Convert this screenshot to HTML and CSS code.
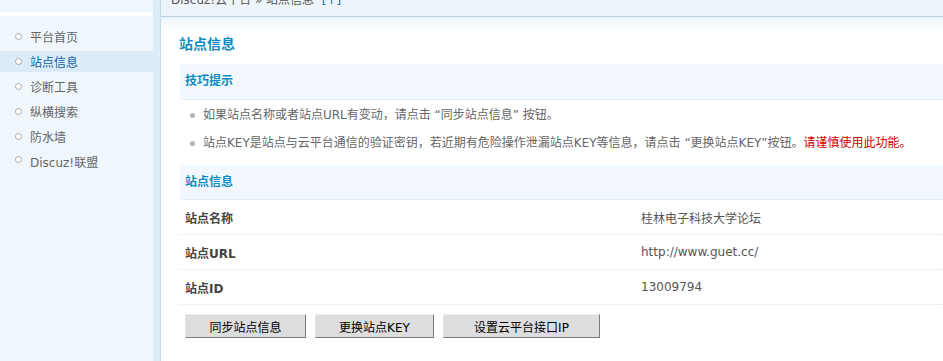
FILE: index.html
```html
<!DOCTYPE html>
<html lang="zh-CN">
<head>
	<meta charset="utf-8">
	<title>站点信息 - Discuz!云平台</title>
	<link rel="stylesheet" href="styles.css">
</head>
<body>

<div class="page">
	<div class="side">
		<div class="side-top"></div>
		<ul class="menu">
			<li><a href="#">平台首页</a></li>
			<li class="on"><a href="#">站点信息</a></li>
			<li><a href="#">诊断工具</a></li>
			<li><a href="#">纵横搜索</a></li>
			<li><a href="#">防水墙</a></li>
			<li class="last"><a href="#">Discuz!联盟</a></li>
		</ul>
	</div>

	<div class="main">
		<div class="crumb"><div class="crumb-text">Discuz!云平台 &raquo; 站点信息 &nbsp;<a href="#">[+]</a></div></div>

		<div class="content">
			<h3 class="title">站点信息</h3>

			<div class="box-head head-tips">技巧提示</div>
			<ul class="tips">
				<li>如果站点名称或者站点URL有变动，请点击 “同步站点信息” 按钮。</li>
				<li>站点KEY是站点与云平台通信的验证密钥，若近期有危险操作泄漏站点KEY等信息，请点击 “更换站点KEY”按钮。<span class="warn">请谨慎使用此功能。</span></li>
			</ul>

			<div class="box-head">站点信息</div>
			<div class="info">
				<div class="info-row"><span class="label">站点名称</span><span class="value">桂林电子科技大学论坛</span></div>
				<div class="info-row"><span class="label">站点URL</span><span class="value">http://www.guet.cc/</span></div>
				<div class="info-row"><span class="label">站点ID</span><span class="value">13009794</span></div>
			</div>

			<div class="buttons">
				<button class="btn btn-sync">同步站点信息</button>
				<button class="btn btn-key">更换站点KEY</button>
				<button class="btn btn-ip">设置云平台接口IP</button>
			</div>
		</div>
	</div>
</div>

</body>
</html>
```

FILE: styles.css
```css
body { margin: 0; padding: 0; font-family: "DejaVu Sans", "Noto Sans CJK SC", sans-serif; font-size: 12px; color: #666; background: #fff; }
ul { list-style: none; margin: 0; padding: 0; }
a { text-decoration: none; color: inherit; }

.page { display: flex; min-height: 361px; }

.side { width: 153px; flex: none; background: #eff7fc; border-right: 7px solid #ddedf8; }
.side-top { height: 12px; border-bottom: 4px solid #fbfdfe; background: #eef6fb; }
.menu { padding-top: 10px; }
.menu li { display: flex; align-items: center; height: 21px; margin-bottom: 4px; padding-left: 15px; }
.menu li::before { content: ""; width: 5px; height: 5px; border: 1px solid #aaa; border-radius: 50%; margin-right: 8px; background: #fff; }
.menu li.on { background: #dbecf8; color: #21629f; }
.menu li.last { margin-top: 4px; }
.menu li.last::before { align-self: flex-start; margin-top: 5px; }

.main { flex: 1; border-left: 1px solid #c6dae8; min-width: 0; }
.crumb { height: 16px; overflow: hidden; background: #eef5fa; border-bottom: 1px solid #b8cedb; }
.crumb-text { margin-top: -9px; padding-left: 10px; line-height: 18px; color: #555; white-space: nowrap; }
.crumb-text a { color: #2366a8; }

.content { padding: 17px 0 20px 19px; background: linear-gradient(#eaf4fc, #fff 14px); }
.title { margin: 0 0 10px -1px; font-size: 14px; line-height: 20px; color: #0d8dc0; }

.box-head { height: 34px; line-height: 34px; padding-left: 5px; background: #f2f8fd; border-bottom: 1px dotted #d6e6f2; font-weight: bold; color: #0d8dc0; }
.head-tips { height: 35px; line-height: 35px; }
.tips { padding-top: 1px; margin-bottom: 8px; }
.tips li { display: flex; align-items: center; line-height: 28px; padding-left: 10px; white-space: nowrap; }
.tips li::before { content: ""; width: 5px; height: 5px; border-radius: 50%; background: #b5b5b5; margin-right: 8px; }
.warn { color: #c00; }

.info-row { display: grid; grid-template-columns: 456px 1fr; height: 35px; box-sizing: border-box; align-items: center; padding-left: 5px; border-bottom: 1px dotted #dce6ee; }
.label { font-weight: bold; color: #444; }
.value { color: #555; }

.buttons { display: flex; gap: 9px; padding: 9px 0 0 5px; }
.btn { height: 24px; padding: 0; font-family: "DejaVu Sans", "Noto Sans CJK SC", sans-serif; font-size: 12px; color: #000; background: #ddd; border: 1px solid; border-color: #eee #7a7a7a #7a7a7a #e4e4e4; }
.btn-sync { width: 121px; }
.btn-key { width: 119px; }
.btn-ip { width: 157px; }
```
